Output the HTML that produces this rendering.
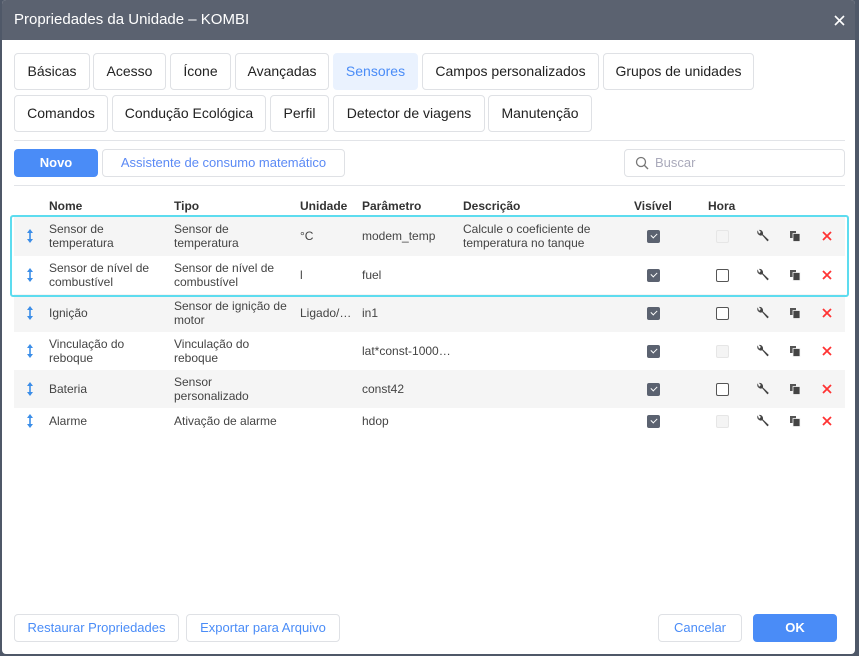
<!DOCTYPE html><html><head><style>
*{box-sizing:border-box;margin:0;padding:0}
body{width:859px;height:656px;background:#4f5868;font-family:"Liberation Sans",sans-serif;position:relative;overflow:hidden}
.win{position:absolute;left:2px;top:0;width:853px;height:654px;background:#fff;border-radius:4px;overflow:hidden}
.title{position:absolute;left:0;top:0;width:100%;height:40px;background:#5b6270;color:#fff;font-size:15px;line-height:40px;padding-left:12px}
.a{position:absolute}
.tab{position:absolute;height:37px;border:1px solid #dfe1e5;border-radius:4px;font-size:14px;color:#222;text-align:center;line-height:35px;background:#fff}
.sel{background:#eaf2fe;border-color:#eaf2fe;color:#4a8cf7}
.line{position:absolute;left:12px;width:831px;height:1px;background:#e2e4e8}
.btn{position:absolute;height:28px;border:1px solid #dfe1e5;border-radius:4px;font-size:13px;color:#4a8cf7;text-align:center;line-height:26px;background:#fff}
.row{position:absolute;left:12px;width:831px;font-size:12px;color:#444}
.row div{position:absolute;line-height:14px}
.sh{background:#f5f5f5}
.hd{font-weight:bold;color:#333;font-size:12px;position:absolute;top:199px}
.cb{position:absolute;width:13px;height:13px;border-radius:2px}
.on{background:#5b6270}
.on:after{content:"";position:absolute;left:3.5px;top:3px;width:5px;height:3px;border-left:1.6px solid #fff;border-bottom:1.6px solid #fff;transform:rotate(-45deg)}
.off{border:1px solid #555;background:#fff}
.dis{border:1px solid #e6e6e6;background:#f4f4f4}
</style></head><body><div class="win">
<div class="title">Propriedades da Unidade – KOMBI</div>
<svg class="a" style="left:832px;top:15px" width="11" height="11" viewBox="0 0 11 11"><path d="M1 1L10 10M10 1L1 10" stroke="#fff" stroke-width="1.6"/></svg>
<div class="tab" style="left:12px;top:53px;width:76px">Básicas</div>
<div class="tab" style="left:91px;top:53px;width:73px">Acesso</div>
<div class="tab" style="left:168px;top:53px;width:61px">Ícone</div>
<div class="tab" style="left:233px;top:53px;width:94px">Avançadas</div>
<div class="tab sel" style="left:331px;top:53px;width:85px">Sensores</div>
<div class="tab" style="left:420px;top:53px;width:177px">Campos personalizados</div>
<div class="tab" style="left:601px;top:53px;width:151px">Grupos de unidades</div>
<div class="tab" style="left:12px;top:95px;width:94px">Comandos</div>
<div class="tab" style="left:110px;top:95px;width:154px">Condução Ecológica</div>
<div class="tab" style="left:268px;top:95px;width:59px">Perfil</div>
<div class="tab" style="left:331px;top:95px;width:152px">Detector de viagens</div>
<div class="tab" style="left:486px;top:95px;width:104px">Manutenção</div>
<div class="line" style="top:140px"></div>
<div class="btn" style="left:12px;top:149px;width:84px;background:#4a8cf7;border-color:#4a8cf7;color:#fff;font-weight:bold">Novo</div>
<div class="btn" style="left:100px;top:149px;width:243px;color:#5b8af5">Assistente de consumo matemático</div>
<div class="btn" style="left:622px;top:149px;width:221px;text-align:left;padding-left:30px;color:#aab">Buscar
<svg class="a" style="left:10px;top:6px" width="14" height="14" viewBox="0 0 14 14"><circle cx="6" cy="6" r="4.5" fill="none" stroke="#777" stroke-width="1.3"/><path d="M9.3 9.3L13 13" stroke="#777" stroke-width="1.4"/></svg></div>
<div class="line" style="top:185px"></div>
<div class="hd" style="left:47px">Nome</div><div class="hd" style="left:172px">Tipo</div><div class="hd" style="left:298px">Unidade</div><div class="hd" style="left:360px">Parâmetro</div><div class="hd" style="left:461px">Descrição</div><div class="hd" style="left:632px">Visível</div><div class="hd" style="left:706px">Hora</div>
<div id="rows"></div>
<div class="a" style="left:8px;top:215px;width:839px;height:82px;border:2px solid #5ddcef;border-radius:3px"></div>
<div class="btn" style="left:12px;top:614px;width:165px">Restaurar Propriedades</div>
<div class="btn" style="left:184px;top:614px;width:154px">Exportar para Arquivo</div>
<div class="btn" style="left:656px;top:614px;width:84px">Cancelar</div>
<div class="btn" style="left:751px;top:614px;width:84px;background:#4a8cf7;border-color:#4a8cf7;color:#fff;font-weight:bold">OK</div>
</div>
<script>
var R=[[216,40,1,"Sensor de<br>temperatura","Sensor de<br>temperatura","°C","modem_temp","Calcule o coeficiente de<br>temperatura no tanque","dis"],
[256,38,0,"Sensor de nível de<br>combustível","Sensor de nível de<br>combustível","l","fuel","","off"],
[294,38,1,"Ignição","Sensor de ignição de<br>motor","Ligado/…","in1","","off"],
[332,38,0,"Vinculação do<br>reboque","Vinculação do<br>reboque","","lat*const-1000…","","dis"],
[370,38,1,"Bateria","Sensor<br>personalizado","","const42","","off"],
[408,26,0,"Alarme","Ativação de alarme","","hdop","","dis"]];
var h="";R.forEach(function(r){var t=r[0],H=r[1],m=H/2;function c(x,s){var n=s.indexOf("<br>")>=0;return '<div style="left:'+x+'px;top:'+(n?m-14:m-7)+'px">'+s+'</div>';}
h+='<div class="row'+(r[2]?' sh':'')+'" style="top:'+t+'px;height:'+H+'px">'+
'<svg class="a" style="position:absolute;left:12px;top:'+(m-8)+'px" width="8" height="16" viewBox="0 0 8 16"><path d="M4 1L7 5H1Z M4 15L7 11H1Z" fill="#3b8de8"/><rect x="3.2" y="4" width="1.6" height="8" fill="#3b8de8"/></svg>'+
c(35,r[3])+c(160,r[4])+c(286,r[5])+c(348,r[6])+c(449,r[7])+
'<span class="cb on" style="left:633px;top:'+(m-6)+'px"></span><span class="cb '+r[8]+'" style="left:702px;top:'+(m-6)+'px"></span>'+
'<svg class="a" style="position:absolute;left:742px;top:'+(m-7)+'px" width="14" height="14" viewBox="0 0 12 12"><path d="M1.5 1.2a3 3 0 0 0 3.8 4.2L9.8 10.6l1.2-1.2L5.9 4.6A3 3 0 0 0 2.4 0.8l1.8 1.8-1.6 1.6z" fill="#444"/></svg>'+
'<svg class="a" style="position:absolute;left:775px;top:'+(m-6)+'px" width="12" height="12" viewBox="0 0 12 12"><rect x="1" y="1" width="6" height="7" fill="#555"/><rect x="4" y="3.5" width="7" height="8" fill="#444" stroke="#f5f5f5" stroke-width="0.8"/></svg>'+
'<svg class="a" style="position:absolute;left:808px;top:'+(m-5)+'px" width="10" height="10" viewBox="0 0 10 10"><path d="M1 1L9 9M9 1L1 9" stroke="#f33" stroke-width="1.8"/></svg></div>';});
document.getElementById("rows").innerHTML=h;
</script></body></html>
